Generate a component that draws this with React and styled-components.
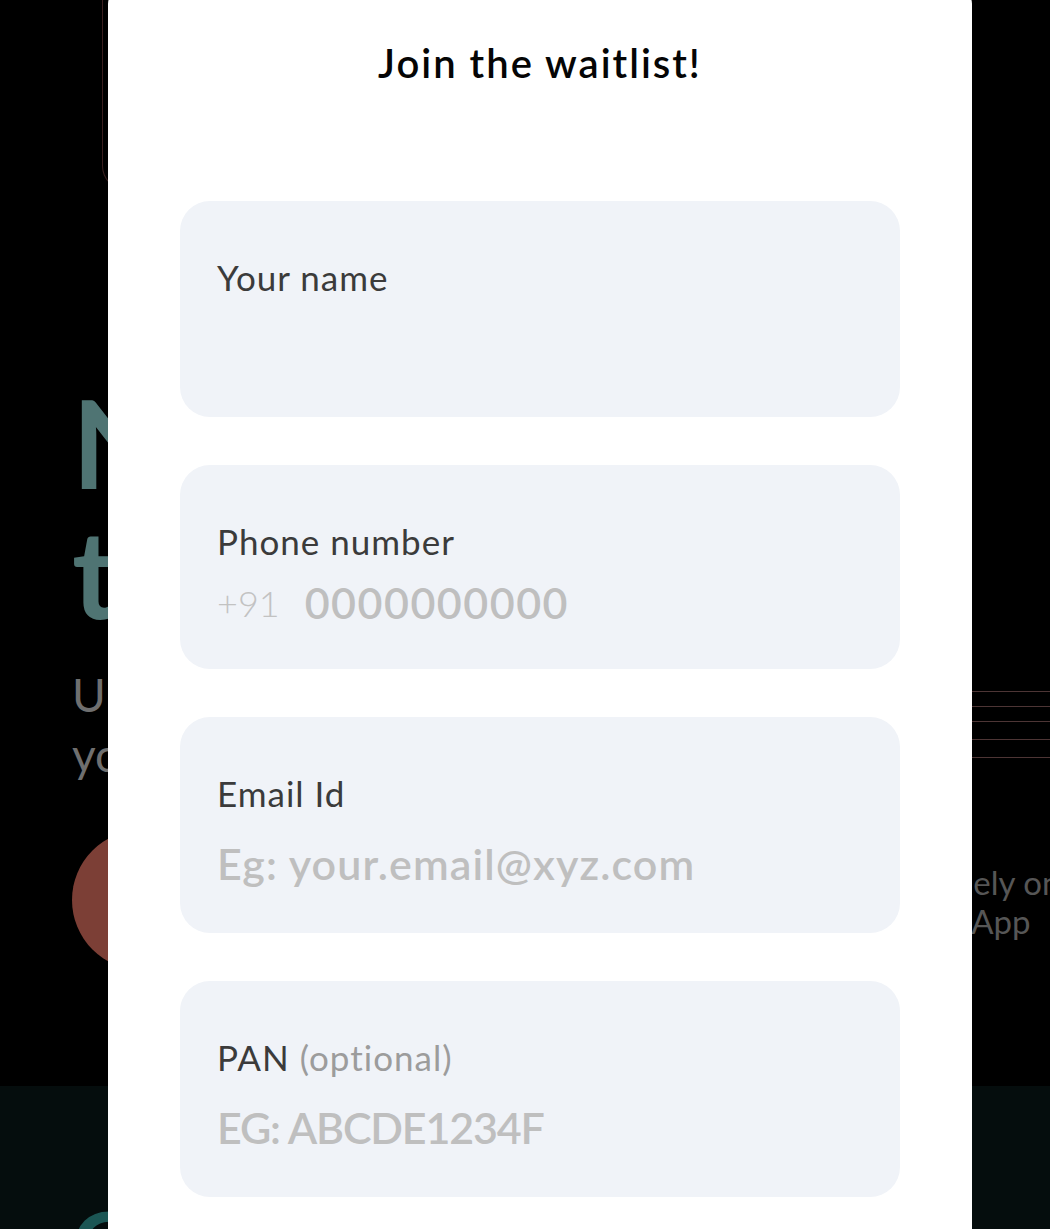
import React from "react";
import styled, { createGlobalStyle } from "styled-components";

const GlobalStyle = createGlobalStyle`
  html, body {
    margin: 0;
    padding: 0;
    background: #000;
    overflow: hidden;
  }
  body {
    width: 1050px;
    height: 1229px;
    font-family: "Lato", "Noto Sans", sans-serif;
  }
  * { box-sizing: border-box; }
`;

const lineGaps = [0, 14, 14, 17, 17];

export default function App() {
  return (
    <>
      <GlobalStyle />
      <Page>
        <TopCard />
        <Hero>
          <HeroLeft>
            <Headline>
              Never miss
              <br />
              the right time
            </Headline>
            <Subtitle>
              Understand the market and
              <br />
              your portfolio better
            </Subtitle>
            <CtaButton>Join waitlist</CtaButton>
          </HeroLeft>
          <HeroRight>
            <Lines>
              {lineGaps.map((gap, i) => (
                <Line key={i} $gap={gap} />
              ))}
            </Lines>
            <Caption>
              Solely on
              <br />
              an App
            </Caption>
          </HeroRight>
        </Hero>
        <Band>
          <BandTitle>Grow</BandTitle>
        </Band>
      </Page>

      <Overlay>
        <Modal>
          <Title>Join the waitlist!</Title>
          <Form>
            <Field>
              <Label>Your name</Label>
              <TextInput type="text" />
            </Field>
            <Field $compact>
              <Label>Phone number</Label>
              <PhoneRow>
                <Prefix>+91</Prefix>
                <TextInput type="tel" placeholder="0000000000" $inline />
              </PhoneRow>
            </Field>
            <Field>
              <Label>Email Id</Label>
              <TextInput
                type="email"
                placeholder="Eg: your.email@xyz.com"
                $spacing={1.1}
              />
            </Field>
            <Field>
              <Label>
                PAN <Muted>(optional)</Muted>
              </Label>
              <TextInput type="text" placeholder="EG: ABCDE1234F" $spacing={-1.2} />
            </Field>
          </Form>
        </Modal>
      </Overlay>
    </>
  );
}

const Page = styled.div`
  width: 1050px;
  height: 1229px;
  overflow: hidden;
  display: flex;
  flex-direction: column;
`;

const TopCard = styled.div`
  flex: none;
  margin-left: 102px;
  width: 820px;
  height: 190px;
  border: 1px solid #3b2020;
  border-top: none;
  border-radius: 0 0 24px 24px;
`;

const Hero = styled.section`
  flex: none;
  height: 896px;
  display: grid;
  grid-template-columns: 856px 1fr;
  padding-left: 72px;
`;

const HeroLeft = styled.div`
  display: flex;
  flex-direction: column;
  align-items: flex-start;
  padding-top: 187px;
`;

const Headline = styled.h1`
  margin: 0;
  font-size: 122px;
  line-height: 130px;
  font-weight: 700;
  color: #4f7473;
  white-space: nowrap;
`;

const Subtitle = styled.p`
  margin: 28px 0 0;
  font-size: 46px;
  line-height: 60px;
  font-weight: 400;
  color: #6f6f6f;
  white-space: nowrap;
`;

const CtaButton = styled.button`
  margin-top: 45px;
  height: 140px;
  width: 360px;
  border: none;
  border-radius: 70px;
  background: #7c3f36;
  color: #fff;
  font-family: inherit;
  font-size: 34px;
`;

const HeroRight = styled.div`
  display: flex;
  flex-direction: column;
  padding-top: 501px;
  min-width: 0;
`;

const Lines = styled.div`
  display: flex;
  flex-direction: column;
  width: 200px;
`;

const Line = styled.div`
  height: 1px;
  margin-top: ${(p) => p.$gap}px;
  background: #4d3535;
`;

const Caption = styled.p`
  margin: 105px 0 0 1px;
  font-size: 33px;
  line-height: 39px;
  color: #565656;
  white-space: nowrap;
`;

const Band = styled.section`
  flex: 1;
  background: #050d0d;
  padding: 106px 0 0 72px;
`;

const BandTitle = styled.h2`
  margin: 0;
  font-size: 90px;
  line-height: 100px;
  font-weight: 700;
  color: #1b5654;
`;

const Overlay = styled.div`
  position: fixed;
  inset: 0;
  display: flex;
  align-items: flex-start;
  padding-left: 108px;
`;

const Modal = styled.div`
  width: 864px;
  height: 1300px;
  margin-top: -12px;
  background: #fff;
  border-radius: 16px;
  padding: 51px 72px 0;
  display: flex;
  flex-direction: column;
`;

const Title = styled.h2`
  margin: 0;
  text-align: center;
  font-size: 40px;
  line-height: 48px;
  font-weight: 600;
  letter-spacing: 2px;
  color: #050505;
`;

const Form = styled.form`
  margin-top: 114px;
  display: flex;
  flex-direction: column;
  gap: 48px;
`;

const Field = styled.label`
  display: flex;
  flex-direction: column;
  background: #f0f3f8;
  border-radius: 30px;
  padding: 52px 37px ${(p) => (p.$compact ? "41px" : "40px")};
`;

const Label = styled.span`
  font-size: 35px;
  line-height: 48px;
  letter-spacing: 1px;
  color: #3b3b3b;
`;

const Muted = styled.span`
  color: #9c9c9c;
`;

const PhoneRow = styled.div`
  margin-top: 12px;
  height: 51px;
  display: flex;
  align-items: center;
  gap: 25px;
`;

const Prefix = styled.span`
  font-size: 36px;
  font-weight: 300;
  color: #c2c2c2;
`;

const TextInput = styled.input`
  display: block;
  margin-top: ${(p) => (p.$inline ? "0" : "16px")};
  height: ${(p) => (p.$inline ? "51px" : "60px")};
  flex: ${(p) => (p.$inline ? "1" : "none")};
  width: ${(p) => (p.$inline ? "auto" : "100%")};
  min-width: 0;
  border: none;
  outline: none;
  padding: 0;
  background: transparent;
  font-family: inherit;
  font-size: 43px;
  font-weight: 600;
  letter-spacing: ${(p) => (p.$spacing ?? 1.5)}px;
  color: #333;
  &::placeholder {
    color: #bfbfbf;
  }
`;
